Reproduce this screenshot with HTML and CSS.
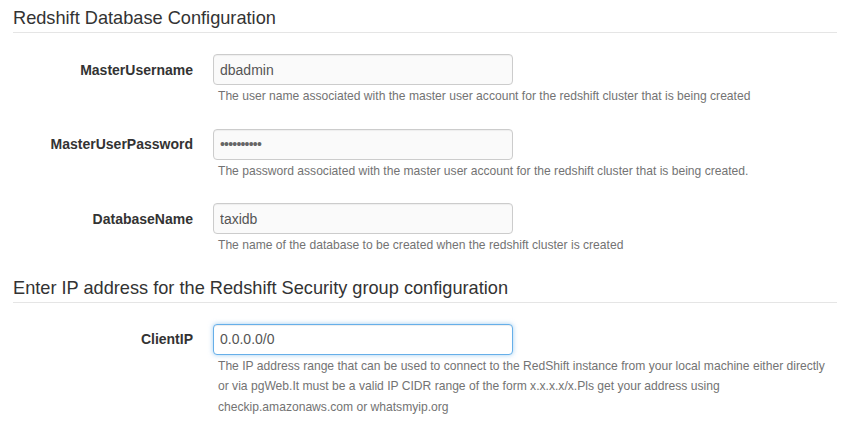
FILE: index.html
```html
<!DOCTYPE html>
<html>
<head>
<meta charset="utf-8">
<link rel="stylesheet" href="styles.css">
</head>
<body>
<div class="page">
  <section class="group">
    <h2 class="group-title">Redshift Database Configuration</h2>
    <div class="field">
      <label class="field-label">MasterUsername</label>
      <input class="field-input" type="text" value="dbadmin">
      <p class="field-help">The user name associated with the master user account for the redshift cluster that is being created</p>
    </div>
    <div class="field">
      <label class="field-label">MasterUserPassword</label>
      <input class="field-input field-input-password" type="password" value="abcdefghij">
      <p class="field-help">The password associated with the master user account for the redshift cluster that is being created.</p>
    </div>
    <div class="field">
      <label class="field-label">DatabaseName</label>
      <input class="field-input" type="text" value="taxidb">
      <p class="field-help">The name of the database to be created when the redshift cluster is created</p>
    </div>
  </section>
  <section class="group">
    <h2 class="group-title">Enter IP address for the Redshift Security group configuration</h2>
    <div class="field">
      <label class="field-label">ClientIP</label>
      <input class="field-input is-focused" type="text" value="0.0.0.0/0">
      <p class="field-help">The IP address range that can be used to connect to the RedShift instance from your local machine either directly or via pgWeb.It must be a valid IP CIDR range of the form x.x.x.x/x.Pls get your address using checkip.amazonaws.com or whatsmyip.org</p>
    </div>
  </section>
</div>
</body>
</html>
```
FILE: styles.css
```css
html, body {
  margin: 0;
  padding: 0;
  background: #fff;
}
body {
  font-family: "Liberation Sans", Arial, sans-serif;
  color: #333;
}
.page {
  padding: 8px 14px 0 13px;
}
.group-title {
  margin: 0 0 21px 0;
  font-size: 18.2px;
  line-height: 20px;
  font-weight: normal;
  color: #333;
  padding-bottom: 4px;
  border-bottom: 1px solid #e5e5e5;
}
.group + .group .group-title {
  margin-top: 5px;
}
.field {
  display: grid;
  grid-template-columns: 180px 1fr;
  column-gap: 20px;
  margin-bottom: 22px;
}
.field-label {
  grid-column: 1;
  grid-row: 1;
  align-self: center;
  text-align: right;
  font-size: 14px;
  font-weight: bold;
  color: #333;
}
.field-input {
  grid-column: 2;
  grid-row: 1;
  box-sizing: border-box;
  width: 300px;
  height: 31px;
  margin: 0;
  padding: 0 6px;
  font-family: "Liberation Sans", Arial, sans-serif;
  font-size: 14px;
  color: #555;
  background: #fafafa;
  border: 1px solid #ccc;
  border-radius: 4px;
  box-shadow: inset 0 1px 1px rgba(0,0,0,0.05);
  outline: none;
}
.field-input-password {
  letter-spacing: -0.8px;
  color: #666;
}
.field-input.is-focused {
  background: #fff;
  border-color: #66afe9;
  box-shadow: inset 0 1px 1px rgba(0,0,0,0.075), 0 0 5px rgba(102,175,233,0.6);
}
.field-help {
  grid-column: 2;
  grid-row: 2;
  margin: 1px 0 0 0;
  padding: 0 8px 0 5px;
  font-size: 12.1px;
  line-height: 20.5px;
  color: #737373;
}
```
